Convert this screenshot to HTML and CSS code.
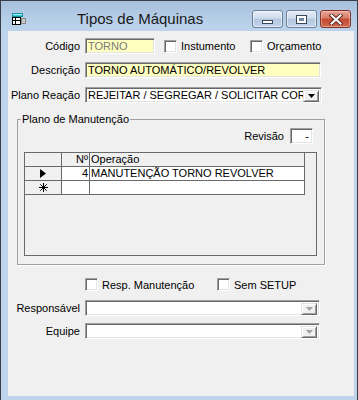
FILE: index.html
```html
<!DOCTYPE html>
<html lang="pt">
<head>
<meta charset="utf-8">
<title>Tipos de Máquinas</title>
<link rel="stylesheet" href="styles.css">
</head>
<body>
<div class="window">
  <div class="titlebar">
    <svg class="app-icon" width="16" height="16" viewBox="0 0 16 16">
      <rect x="1.5" y="1.5" width="10" height="3" fill="#35c9d4" stroke="#1a8f98" stroke-width="1"/>
      <rect x="2" y="2" width="9" height="1" fill="#9ff0f4"/>
      <rect x="10.5" y="6.5" width="4" height="5" fill="#c4c4c4" stroke="#8a8a8a" stroke-width="1"/>
      <rect x="1.5" y="5.5" width="8" height="7" fill="#fff" stroke="#000" stroke-width="1"/>
      <line x1="4.5" y1="6" x2="4.5" y2="12" stroke="#000" stroke-width="1"/>
      <line x1="2" y1="8.5" x2="9" y2="8.5" stroke="#000" stroke-width="1"/>
    </svg>
    <span class="title">Tipos de Máquinas</span>
    <div class="caption-buttons">
      <span class="cbtn cbtn-min"><i class="glyph-min"></i></span>
      <span class="cbtn cbtn-max"><i class="glyph-max"></i></span>
      <span class="cbtn cbtn-close">
        <svg width="14" height="11" viewBox="0 0 14 11">
          <path d="M2.5 1.5 L11.5 9.5 M11.5 1.5 L2.5 9.5" stroke="#5a2a22" stroke-width="4" stroke-linecap="square"/>
          <path d="M2.5 1.5 L11.5 9.5 M11.5 1.5 L2.5 9.5" stroke="#fff" stroke-width="2" stroke-linecap="square"/>
        </svg>
      </span>
    </div>
  </div>

  <div class="client">
    <div class="row row-codigo">
      <span class="lbl">Código</span>
      <div class="field yellow muted w-codigo">TORNO</div>
      <span class="chk chk-first"></span>
      <span class="chk-label w-inst">Instumento</span>
      <span class="chk"></span>
      <span class="chk-label">Orçamento</span>
    </div>

    <div class="row row-desc">
      <span class="lbl">Descrição</span>
      <div class="field yellow w-desc">TORNO AUTOMÁTICO/REVOLVER</div>
    </div>

    <div class="row row-plano">
      <span class="lbl">Plano Reação</span>
      <div class="field select w-plano">
        <span class="select-text">REJEITAR / SEGREGAR / SOLICITAR CORRETIVA</span>
        <span class="drop"><svg width="7" height="4" viewBox="0 0 7 4"><path d="M0 0H7L3.5 4Z" fill="#000"/></svg></span>
      </div>
    </div>

    <fieldset class="group">
      <legend>Plano de Manutenção</legend>
      <div class="revisao">
        <span class="rev-lbl">Revisão</span>
        <div class="field rev-field">-</div>
      </div>
      <div class="grid">
        <div class="gcell gsel ghead"></div>
        <div class="gcell gnum ghead">Nº</div>
        <div class="gcell gop ghead">Operação</div>

        <div class="gcell gsel"><svg width="6" height="9" viewBox="0 0 6 9"><path d="M0 0L6 4.5L0 9Z" fill="#000"/></svg></div>
        <div class="gcell gnum gdata">4</div>
        <div class="gcell gop gdata">MANUTENÇÃO TORNO REVOLVER</div>

        <div class="gcell gsel"><svg width="9" height="9" viewBox="0 0 9 9"><path d="M4.5 0V9M0 4.5H9M1.3 1.3L7.7 7.7M7.7 1.3L1.3 7.7" stroke="#000" stroke-width="1"/></svg></div>
        <div class="gcell gnum gdata"></div>
        <div class="gcell gop gdata"></div>
      </div>
    </fieldset>

    <div class="row row-checks">
      <span class="chk chk-resp"></span>
      <span class="chk-label w-resp">Resp. Manutenção</span>
      <span class="chk"></span>
      <span class="chk-label">Sem SETUP</span>
    </div>

    <div class="row row-resp">
      <span class="lbl">Responsável</span>
      <div class="field select disabled w-resp-sel">
        <span class="select-text"></span>
        <span class="drop"><svg width="7" height="4" viewBox="0 0 7 4"><path d="M0 0H7L3.5 4Z" fill="#a0a0a0"/></svg></span>
      </div>
    </div>

    <div class="row row-equipe">
      <span class="lbl">Equipe</span>
      <div class="field select disabled w-resp-sel">
        <span class="select-text"></span>
        <span class="drop"><svg width="7" height="4" viewBox="0 0 7 4"><path d="M0 0H7L3.5 4Z" fill="#a0a0a0"/></svg></span>
      </div>
    </div>
  </div>
</div>
</body>
</html>
```

FILE: styles.css
```css
* { box-sizing: border-box; }
html, body { margin: 0; padding: 0; }
body {
  width: 358px;
  height: 400px;
  overflow: hidden;
  background: #bdd4ec;
  font-family: "Liberation Sans", Arial, sans-serif;
  font-size: 11px;
  color: #000;
}

.window {
  width: 358px;
  height: 400px;
  background: #bdd4ec;
  border: 1px solid #3a3f46;
  border-bottom: none;
}

/* title bar */
.titlebar {
  display: flex;
  align-items: flex-start;
  height: 30px;
  background: linear-gradient(#a6bfdc, #b6cde7 55%, #bdd4ec);
}
.app-icon { margin: 11px 0 0 10px; flex: none; }
.title {
  margin: 9px 0 0 50px;
  font-size: 15px;
  line-height: 18px;
  color: #1a1a1a;
  white-space: nowrap;
}
.caption-buttons {
  margin: 9px 6px 0 auto;
  display: flex;
  gap: 3px;
}
.cbtn {
  width: 31px;
  height: 18px;
  border: 1px solid #6b7f96;
  border-radius: 3px;
  display: flex;
  align-items: center;
  justify-content: center;
  background: linear-gradient(#e4ecf6, #cfdcec 45%, #b4c7de 50%, #c3d5ea);
  box-shadow: inset 0 0 0 1px rgba(255,255,255,0.55);
}
.cbtn-min { align-items: flex-end; padding-bottom: 3px; }
.glyph-min {
  display: block;
  width: 11px;
  height: 4px;
  background: #fff;
  border: 1px solid #38475a;
}
.glyph-max {
  display: block;
  width: 11px;
  height: 9px;
  border: 1px solid #38475a;
  background: #6f86a3;
  box-shadow: inset 0 0 0 2px #fff;
}
.cbtn-close {
  border-color: #7e3327;
  background: linear-gradient(#e8a798, #d57b67 45%, #c4482f 50%, #cf6a50);
  box-shadow: inset 0 0 0 1px rgba(255,220,210,0.45);
}

/* client area */
.client {
  margin-left: 7px;
  width: 346px;
  height: 365px;
  background: #f0f0f0;
  padding-top: 7px;
}
.row {
  display: flex;
  align-items: center;
  height: 16px;
}
.row-desc { margin-top: 8px; }
.row-plano { margin-top: 9px; }
.lbl {
  width: 72px;
  margin-right: 5px;
  text-align: right;
  white-space: nowrap;
  flex: none;
}

.field {
  height: 16px;
  border: 1px solid;
  border-color: #a0a0a0 #fff #fff #a0a0a0;
  box-shadow: inset 1px 1px 0 #696969, inset -1px -1px 0 #e3e3e3;
  background: #fff;
  padding: 1px 0 0 2px;
  line-height: 13px;
  white-space: nowrap;
  overflow: hidden;
  flex: none;
}
.yellow { background: #ffffc0; }
.muted { color: #7a7a7a; }
.w-codigo { width: 70px; }
.w-desc { width: 236px; }
.w-plano { width: 237px; }

.select {
  display: flex;
  padding: 2px 2px 2px 2px;
}
.select-text {
  flex: 1;
  overflow: hidden;
  white-space: nowrap;
  line-height: 12px;
  margin-top: -1px;
}
.drop {
  flex: none;
  width: 16px;
  height: 12px;
  display: flex;
  align-items: center;
  justify-content: center;
  background: #f0f0f0;
  border: 1px solid;
  border-color: #e3e3e3 #696969 #696969 #e3e3e3;
  box-shadow: inset 1px 1px 0 #fff, inset -1px -1px 0 #a0a0a0;
}
.w-resp-sel { width: 235px; }

.chk {
  width: 13px;
  height: 13px;
  flex: none;
  background: #fff;
  border: 1px solid;
  border-color: #a0a0a0 #fff #fff #a0a0a0;
  box-shadow: inset 1px 1px 0 #696969, inset -1px -1px 0 #e3e3e3;
}
.chk-first { margin-left: 9px; }
.chk-label { margin-left: 4px; white-space: nowrap; }
.w-inst { width: 69px; flex: none; }

/* group box */
.group {
  margin: 10px 0 0 9px;
  width: 308px;
  padding: 0;
  border: 1px solid #a0a0a0;
  box-shadow: 1px 1px 0 #fff;
}
.group legend {
  margin-left: 3px;
  padding: 0 1px;
  line-height: 13px;
}
.revisao {
  display: flex;
  align-items: center;
  justify-content: flex-end;
  margin: 2px 11px 0 0;
  height: 16px;
}
.rev-lbl { margin-right: 6px; }
.rev-field {
  width: 23px;
  text-align: right;
  padding-right: 3px;
}

.grid {
  margin: 8px 7px 8px 6px;
  height: 104px;
  border: 1px solid #696969;
  display: grid;
  grid-template-columns: 37px 28px 215px;
  grid-auto-rows: 14px;
  align-content: start;
  background: #f0f0f0;
}
.gcell {
  border-right: 1px solid #696969;
  border-bottom: 1px solid #696969;
  line-height: 13px;
  white-space: nowrap;
  overflow: hidden;
}
.gsel {
  display: flex;
  align-items: center;
  justify-content: center;
}
.gnum { text-align: right; padding-right: 1px; }
.gop { padding-left: 1px; }
.gdata { background: #fff; }
.ghead { background: #f0f0f0; }

/* lower checks / selects */
.row-checks { margin-top: 13px; height: 13px; }
.chk-resp { margin-left: 77px; }
.w-resp { width: 115px; flex: none; }
.row-resp { margin-top: 9px; }
.row-equipe { margin-top: 7px; }
```
